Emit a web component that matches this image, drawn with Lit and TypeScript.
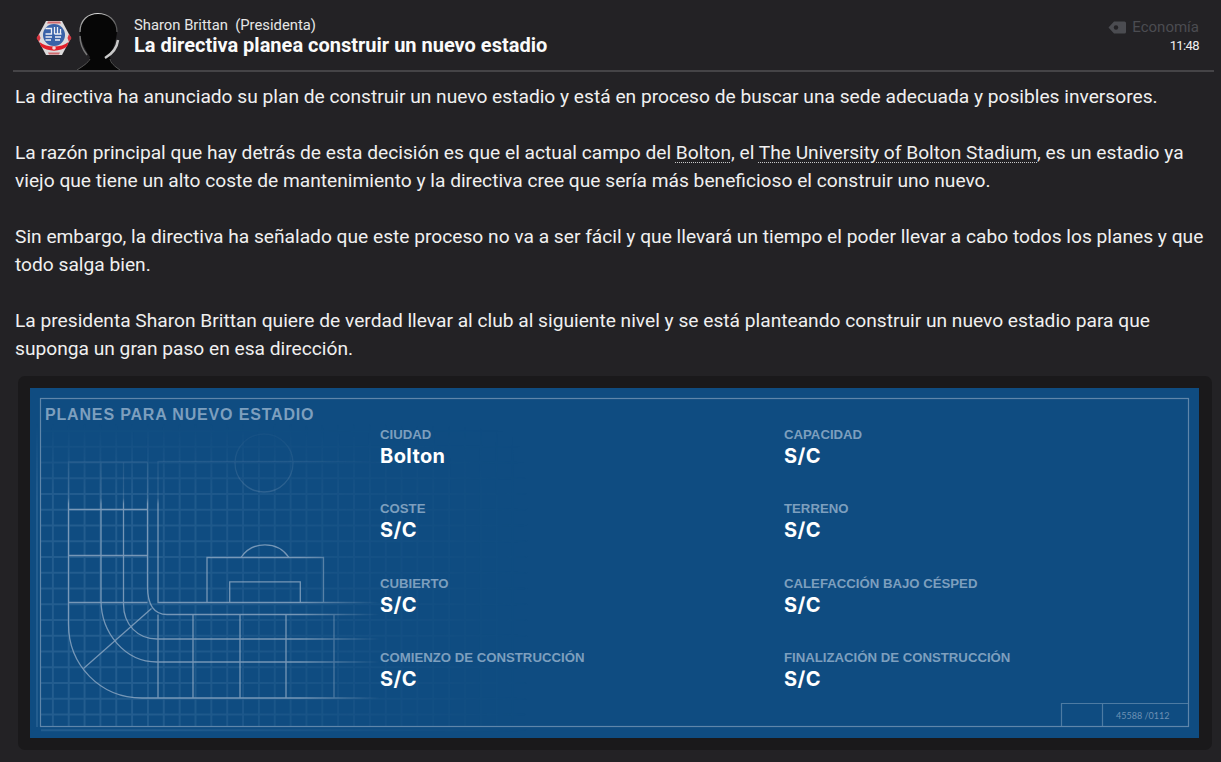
import { LitElement, html, css, svg } from "lit";
import { customElement } from "lit/decorators.js";

const gridXs = Array.from({ length: 40 }, (_, i) => 7 + i * 15.85);
const gridYs = Array.from({ length: 22 }, (_, i) => 11.4 + i * 15.75);

@customElement("app-root")
export class AppRoot extends LitElement {
  static styles = css`
    :host { display: block; width: 1221px; height: 762px; background: #232225; color: #f0f0f0; font-family: Roboto, sans-serif; overflow: hidden; }
    .head { height: 70px; margin: 0 7px 0 13px; border-bottom: 2px solid #454447; display: flex; align-items: stretch; }
    .avatars { display: flex; align-items: flex-end; width: 108px; padding-left: 23px; box-sizing: border-box; gap: 5px; flex: none; }
    .crest { width: 36px; height: 36px; margin-bottom: 14px; flex: none; }
    .person { width: 44px; height: 58px; flex: none; }
    .titles { padding: 15px 0 0 13px; flex: 1; }
    .who { font-size: 14.8px; line-height: 20px; color: #e6e6e6; white-space: pre; }
    .title { font-size: 20px; line-height: 20px; font-weight: 700; color: #fafafa; }
    .meta { padding: 17px 15px 0 0; text-align: right; }
    .cat { font-size: 15px; line-height: 20px; color: #4b4c51; display: flex; align-items: center; gap: 6px; justify-content: flex-end; }
    .cat svg { width: 18px; height: 13px; }
    .time { font-size: 13px; line-height: 18px; letter-spacing: -0.6px; color: #f0f0f0; }
    .body { padding: 11px 15px 0; }
    .body p { margin: 0 0 28px; font-size: 19.18px; line-height: 28px; color: #f0f0f0; }
    .link { text-decoration: underline dotted #c9c9c9 1px; text-underline-offset: 3px; }
    .panel { position: absolute; left: 18px; top: 376px; width: 1194px; height: 374px; box-sizing: border-box; padding: 12px 13px 12px 12px; background: #1a191b; border-radius: 7px; }
    .blue { position: relative; height: 350px; background: #0f4c81; overflow: hidden; }
    .art { position: absolute; inset: 0; width: 100%; height: 100%; }
    .heading { position: absolute; left: 15px; top: 17px; font-family: "Liberation Sans", sans-serif; font-weight: 700; font-size: 16px; line-height: 19px; letter-spacing: 0.83px; color: #7d9fbe; }
    .facts { position: absolute; left: 350px; top: 39px; display: grid; grid-template-columns: 404px 404px; grid-auto-rows: 74.3px; }
    .label { font-family: "Liberation Sans", sans-serif; font-weight: 700; font-size: 13.2px; line-height: 16px; color: #7d9fbe; }
    .value { font-family: Inter, sans-serif; font-weight: 700; font-size: 20px; line-height: 23px; letter-spacing: 0.4px; color: #fff; margin-top: 2px; }
    .stamp { position: absolute; left: 1086px; top: 322px; font-family: Lato, sans-serif; font-size: 9px; line-height: 12px; color: #6d91b4; }
  `;

  private art() {
    const s = "#8fa9c4";
    return svg`
      <svg class="art" viewBox="0 0 1169 350" fill="none">
        <defs>
          <linearGradient id="rf" gradientUnits="userSpaceOnUse" x1="270" y1="0" x2="350" y2="0">
            <stop offset="0" stop-color="#fff"/><stop offset="1" stop-color="#000"/>
          </linearGradient>
          <mask id="m"><rect width="1169" height="350" fill="url(#rf)"/></mask>
          <linearGradient id="topfade" gradientUnits="userSpaceOnUse" x1="0" y1="50" x2="0" y2="125">
            <stop offset="0" stop-color="#111"/><stop offset="0.8" stop-color="#555"/><stop offset="0.88" stop-color="#fff"/>
          </linearGradient>
          <mask id="m2"><rect width="1169" height="350" fill="url(#topfade)"/></mask>
          <linearGradient id="gridfade" gradientUnits="userSpaceOnUse" x1="0" y1="0" x2="500" y2="0">
            <stop offset="0.2" stop-color="#fff"/><stop offset="0.7" stop-color="#444"/><stop offset="1" stop-color="#000"/>
          </linearGradient>
          <linearGradient id="gridtop" gradientUnits="userSpaceOnUse" x1="0" y1="35" x2="0" y2="110">
            <stop offset="0" stop-color="#000"/><stop offset="1" stop-color="#fff"/>
          </linearGradient>
          <mask id="g1"><rect width="1169" height="350" fill="url(#gridfade)"/></mask>
          <mask id="g2"><rect width="1169" height="350" fill="url(#gridtop)"/></mask>
        </defs>
        <g mask="url(#g1)"><g mask="url(#g2)" stroke="#4a7ca8" stroke-width="2" opacity=".36">
          ${gridXs.map((x) => svg`<line x1=${x} y1="11" x2=${x} y2="339"/>`)}
          ${gridYs.map((y) => svg`<line x1="11" y1=${y} x2="1158" y2=${y}/>`)}
        </g></g>
        <rect x="10.5" y="10.5" width="1148" height="328" stroke="#5f86aa" stroke-width="1.2"/>
        <path d="M1031.500 338V315.500H1158M1072.500 315.500V338" stroke="#4d7ba3" stroke-width="1.2"/>
        <g mask="url(#m)"><g mask="url(#m2)" stroke=${s} stroke-width="1.3" opacity=".8">
          <path d="M38.500 74V236C38.500 277 70 310 112 310H350"/>
          <path d="M71 74V212C71 245 95 274 127 274H350"/>
          <path d="M93.500 74V216C93.500 237 108 251 127 251H350"/>
          <path d="M117.500 74V198C117.500 215 123 226.500 137 226.500H350"/>
          <path d="M128 73V214.500H350"/>
          <path d="M38 74H117.500M128 73.500H340M38 121.500H117.500M38 167.500H117.500M38 214.500H117.500"/>
          <path d="M121.500 220.500L53.500 280.500"/>
          <path d="M128 226.500V310M163 226.500V310M210 226.500V310M256 226.500V310M304 226.500V310"/>
          <path d="M177 214V169.500H293.500V214"/>
          <path d="M199.700 214V193.800H270.300V214"/>
          <path d="M211 169.500A29 29 0 0 1 259 169.500"/>
          <circle cx="234" cy="75" r="29"/>
        </g></g>
      </svg>`;
  }

  private fact(label: string, value: string) {
    return html`<div><div class="label">${label}</div><div class="value">${value}</div></div>`;
  }

  render() {
    return html`
      <div class="head">
        <div class="avatars">
          <svg class="crest" viewBox="0 0 36 36">
            <path d="M10 1H26L35 18L26 35H10L1 18Z" fill="#dddbdc"/>
            <path d="M12 1.500H24L25 3.500H11ZM13 34.500H23L24 32.500H12Z" fill="#c9444a" opacity=".75"/>
            <path d="M.500 18L3 14L4.500 18L3 22ZM35.500 18L33 14L31.500 18L33 22Z" fill="#d8343e"/>
            <circle cx="18" cy="15" r="11" fill="#3a62a8"/>
            <g stroke="#eef0f5" stroke-width="1.300" fill="none">
              <path d="M9.500 8.500H15.500V14H9.500M18.500 7V14M21.500 7V14M24.500 9V14M18.500 14H25.500"/>
              <path d="M9.500 17H16M9.500 20H15M19 17H25M19 20H24"/>
            </g>
            <path d="M3.500 22C11 28 25 28 32.500 22L31 26.500C25 32 11 32 5 26.500Z" fill="#e21f2a"/>
            <circle cx="18" cy="28" r="1.800" fill="#f3d6d6"/>
          </svg>
          <svg class="person" viewBox="0 0 44 58">
            <defs><linearGradient id="rim" x1="0" x2="1" y1="0" y2="0"><stop offset="0" stop-color="#999"/><stop offset=".45" stop-color="#ddd"/><stop offset="1" stop-color="#555"/></linearGradient></defs>
            <path d="M0 58C7 54 12 50 13 45C7 36 3 27 3 18C4 7 11 1 21 1C31 1 38 7 40 18C40 27 36 36 33 45C34 50 37 54 43 58Z" fill="#060606"/>
            <path d="M3 20C3 8 11 1.500 21 1.500C31 1.500 40 8 40 20" stroke="url(#rim)" stroke-width="1.200" fill="none"/>
            <path d="M3 24C3 33 6 38 10 43" stroke="#777" stroke-width="1.500" fill="none"/>
            <path d="M41 28C40 36 35 42 28 46" stroke="#c9c9c9" stroke-width="2.500" fill="none"/>
            <path d="M0 58C6 54 11 51 13 47M43 58C37 54 34 51 33 47" stroke="#666" stroke-width=".8" fill="none"/>
          </svg>
        </div>
        <div class="titles">
          <div class="who">Sharon Brittan  (Presidenta)</div>
          <div class="title">La directiva planea construir un nuevo estadio</div>
        </div>
        <div class="meta">
          <div class="cat">
            <svg viewBox="0 0 18 13"><path d="M6 .500H16.500A1.500 1.500 0 0 1 18 2V11A1.500 1.500 0 0 1 16.500 12.500H6L.500 6.500Z" fill="#4b4c51"/><circle cx="8" cy="6.500" r="2.200" fill="#232225"/></svg>
            <span>Economía</span>
          </div>
          <div class="time">11:48</div>
        </div>
      </div>
      <div class="body">
        <p>La directiva ha anunciado su plan de construir un nuevo estadio y está en proceso de buscar una sede adecuada y posibles inversores.</p>
        <p>La razón principal que hay detrás de esta decisión es que el actual campo del <span class="link">Bolton</span>, el <span class="link">The University of Bolton Stadium</span>, es un estadio ya viejo que tiene un alto coste de mantenimiento y la directiva cree que sería más beneficioso el construir uno nuevo.</p>
        <p>Sin embargo, la directiva ha señalado que este proceso no va a ser fácil y que llevará un tiempo el poder llevar a cabo todos los planes y que todo salga bien.</p>
        <p>La presidenta Sharon Brittan quiere de verdad llevar al club al siguiente nivel y se está planteando construir un nuevo estadio para que suponga un gran paso en esa dirección.</p>
      </div>
      <div class="panel">
        <div class="blue">
          ${this.art()}
          <div class="heading">PLANES PARA NUEVO ESTADIO</div>
          <div class="facts">
            ${this.fact("CIUDAD", "Bolton")}
            ${this.fact("CAPACIDAD", "S/C")}
            ${this.fact("COSTE", "S/C")}
            ${this.fact("TERRENO", "S/C")}
            ${this.fact("CUBIERTO", "S/C")}
            ${this.fact("CALEFACCIÓN BAJO CÉSPED", "S/C")}
            ${this.fact("COMIENZO DE CONSTRUCCIÓN", "S/C")}
            ${this.fact("FINALIZACIÓN DE CONSTRUCCIÓN", "S/C")}
          </div>
          <div class="stamp">45588 /0112</div>
        </div>
      </div>
    `;
  }
}
